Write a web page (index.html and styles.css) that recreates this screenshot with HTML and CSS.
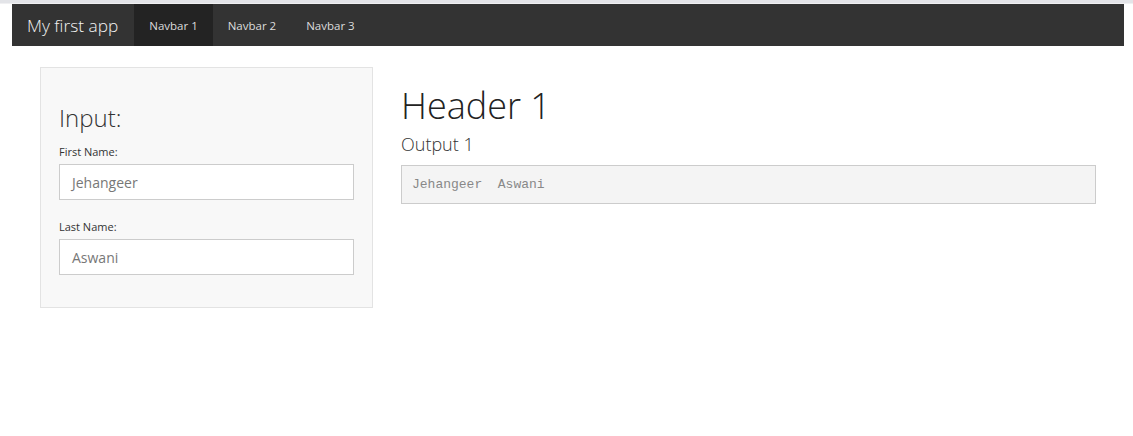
FILE: index.html
```html
<!DOCTYPE html>
<html>
<head>
<meta charset="utf-8">
<link rel="stylesheet" href="styles.css">
</head>
<body>
<div class="topline"></div>
<div class="page">
  <nav class="navbar">
    <span class="brand">My first app</span>
    <ul class="nav">
      <li class="active"><a>Navbar 1</a></li>
      <li><a>Navbar 2</a></li>
      <li><a>Navbar 3</a></li>
    </ul>
  </nav>
  <div class="content">
    <div class="sidebar-col">
      <div class="well">
        <h2 class="well-title">Input:</h2>
        <div class="field">
          <label>First Name:</label>
          <div class="input">Jehangeer</div>
        </div>
        <div class="field">
          <label>Last Name:</label>
          <div class="input">Aswani</div>
        </div>
      </div>
    </div>
    <div class="main-col">
      <h1 class="h1">Header 1</h1>
      <h3 class="h3">Output 1</h3>
      <pre class="out">Jehangeer  Aswani</pre>
    </div>
  </div>
</div>
</body>
</html>
```
FILE: styles.css
```css
html, body {
  margin: 0;
  padding: 0;
  background: #fff;
  font-family: "Open Sans", "Liberation Sans", sans-serif;
  color: #333;
}
.topline {
  height: 3px;
  background: #e3e4e8;
  border-bottom: 1px solid #f0f0f2;
}
.page {
  padding: 0 9px 0 12px;
}
.navbar {
  height: 42px;
  background: #333333;
  display: flex;
  align-items: stretch;
}
.brand {
  display: flex;
  align-items: center;
  padding: 0 15px 0 15px;
  font-size: 17.3px;
  font-weight: 300;
  color: #f2f2f2;
}
.nav {
  list-style: none;
  margin: 0 0 0 1px;
  padding: 0;
  display: flex;
}
.nav li {
  display: flex;
}
.nav li a {
  display: flex;
  align-items: center;
  padding: 0 15px;
  font-size: 11.5px;
  color: #dcdcdc;
}
.nav li.active a {
  background: #232323;
}
.content {
  display: flex;
  padding: 0 14px 0 13px;
}
.sidebar-col {
  width: 362px;
  box-sizing: border-box;
  padding: 21px 14px 0 15px;
}
.well {
  background: #f8f8f8;
  border: 1px solid #e3e3e3;
  padding: 19px 18px 32px 18px;
}
.well-title {
  margin: 16px 0 0;
  font-size: 24px;
  font-weight: 300;
  line-height: 30px;
  color: #333;
}
.field {
  margin-top: 11px;
}
.field + .field {
  margin-top: 19px;
}
.field label {
  display: block;
  font-size: 11px;
  line-height: 16px;
  margin-bottom: 4px;
  color: #333;
}
.input {
  height: 36px;
  box-sizing: border-box;
  border: 1px solid #cccccc;
  background: #fff;
  padding: 0 12px;
  display: flex;
  align-items: center;
  font-size: 14px;
  color: #777;
}
.main-col {
  flex: 1;
  padding: 0 14px;
}
.h1 {
  margin: 40px 0 0;
  font-size: 36px;
  font-weight: 300;
  line-height: 40px;
  color: #222;
}
.h3 {
  margin: 7px 0 0;
  font-size: 18px;
  font-weight: 300;
  line-height: 22px;
  color: #333;
}
.out {
  margin: 10px 0 0;
  padding: 9px 10px;
  background: #f4f4f4;
  border: 1px solid #cccccc;
  font-family: "Liberation Mono", "Courier New", monospace;
  font-size: 13px;
  line-height: 19px;
  color: #888;
}
```
